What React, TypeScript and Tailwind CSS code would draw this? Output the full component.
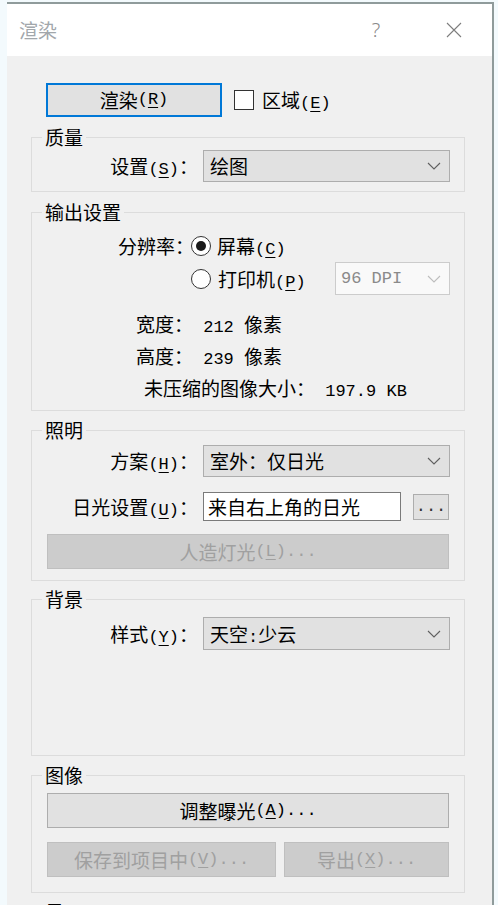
import React from 'react';

const mono = "font-['Liberation_Mono',monospace] text-[17px] leading-[10px]";

function Key({ k, dots }: { k: string; dots?: boolean }) {
  return (
    <span className={mono}>
      (<span className="underline decoration-1 underline-offset-[3px]">{k}</span>){dots ? '...' : ''}
    </span>
  );
}

function Chevron({ color = '#5f5f5f' }: { color?: string }) {
  return (
    <svg width="14" height="8" viewBox="0 0 14 8" fill="none">
      <path d="M1 1 L7 7 L13 1" stroke={color} strokeWidth="1.1" />
    </svg>
  );
}

function Combo({ children, className = '' }: { children: React.ReactNode; className?: string }) {
  return (
    <div className={`flex items-center justify-between border border-[#adadad] bg-[#e1e1e1] pl-[6px] pr-[8px] ${className}`}>
      <span>{children}</span>
      <Chevron />
    </div>
  );
}

function Btn({ children, className = '', disabled }: { children: React.ReactNode; className?: string; disabled?: boolean }) {
  return (
    <div
      className={`flex items-center justify-center border ${
        disabled ? 'border-[#bfbfbf] bg-[#cccccc] text-[#a0a0a0]' : 'border-[#adadad] bg-[#e1e1e1]'
      } ${className}`}
    >
      {children}
    </div>
  );
}

function Radio({ checked }: { checked?: boolean }) {
  return (
    <span className="flex h-[20px] w-[20px] shrink-0 items-center justify-center rounded-full border border-[#333333] bg-white">
      {checked && <span className="h-[10px] w-[10px] rounded-full bg-[#1a1a1a]" />}
    </span>
  );
}

function Group({ title, className = '', children }: { title: string; className?: string; children?: React.ReactNode }) {
  return (
    <fieldset className={`ml-[24px] w-[434px] border border-[#dcdcdc] ${className}`}>
      <legend className="ml-[10px] px-[3px] leading-[20px]">{title}</legend>
      {children}
    </fieldset>
  );
}

function Row({ label, children, className = '' }: { label: React.ReactNode; children: React.ReactNode; className?: string }) {
  return (
    <div className={`flex items-center ${className}`}>
      <div className="w-[166px] shrink-0 text-right whitespace-nowrap">{label}</div>
      <div className="ml-[5px]">{children}</div>
    </div>
  );
}

export default function App() {
  return (
    <div className="h-[905px] overflow-hidden bg-[#f3fafd] pt-[2px] pl-[7px] font-['Noto_Sans_CJK_SC',sans-serif] text-[19px] leading-[20px] text-black">
      <div className="flex h-full w-[487px] flex-col border-t-2 border-r-2 border-[#8f9b9b] bg-[#f0f0f0]">
        {/* title bar */}
        <div className="flex h-[52px] shrink-0 items-center bg-white">
          <span className="pl-[12px] text-[#a2a7ab]">渲染</span>
          <span className="ml-auto w-[20px] text-center font-['Noto_Sans',sans-serif] text-[20px] font-light text-[#8a8a8a]">?</span>
          <svg className="ml-[60px] mr-[30px]" width="16" height="16" viewBox="0 0 16 16">
            <path d="M1 1 L15 15 M15 1 L1 15" stroke="#7d7d7d" strokeWidth="1.1" />
          </svg>
        </div>

        <div className="flex-1 pt-[27px]">
          <div className="flex items-center">
            <Btn className="ml-[39px] h-[34px] w-[176px] border-2 !border-[#0078d7]">
              渲染<Key k="R" />
            </Btn>
            <span className="ml-[12px] h-[20px] w-[20px] border border-[#333333] bg-white" />
            <span className="ml-[8px]">
              区域<Key k="E" />
            </span>
          </div>

          <Group title="质量" className="mt-[10px] pb-[9px]">
            <Row className="mt-[3px]" label={<>设置<Key k="S" />：</>}>
              <Combo className="h-[32px] w-[247px]">绘图</Combo>
            </Row>
          </Group>

          <Group title="输出设置" className="mt-[10px] pb-[12px]">
            <div className="mt-[12px] flex h-[24px] items-center">
              <div className="w-[162px] shrink-0 text-right">分辨率：</div>
              <span className="-ml-[3px]">
                <Radio checked />
              </span>
              <span className="ml-[6px]">
                屏幕<Key k="C" />
              </span>
            </div>
            <div className="mt-[4px] flex h-[33px] items-center">
              <div className="w-[159px] shrink-0" />
              <Radio />
              <span className="ml-[7px] w-[117px] shrink-0">
                打印机<Key k="P" />
              </span>
              <div className="flex h-[33px] w-[115px] items-center justify-between border border-[#cccccc] bg-[#f9f9f9] pl-[5px] pr-[8px]">
                <span className={`${mono} text-[#8a8a8a]`}>96 DPI</span>
                <Chevron color="#bdbdbd" />
              </div>
            </div>
            <div className="mt-[19px] h-[20px] pl-[104px]">
              宽度：<span className={mono}> 212 </span>像素
            </div>
            <div className="mt-[12px] h-[20px] pl-[104px]">
              高度：<span className={mono}> 239 </span>像素
            </div>
            <div className="mt-[12px] h-[20px] pl-[112px]">
              未压缩的图像大小：<span className={mono}> 197.9 KB</span>
            </div>
          </Group>

          <Group title="照明" className="mt-[9px] pb-[11px]">
            <Row className="mt-[5px]" label={<>方案<Key k="H" />：</>}>
              <Combo className="h-[32px] w-[247px]">室外：仅日光</Combo>
            </Row>
            <Row className="mt-[15px]" label={<>日光设置<Key k="U" />：</>}>
              <div className="flex items-center">
                <div className="flex h-[29px] w-[198px] items-center border border-[#7a7a7a] bg-white pl-[4px]">
                  来自右上角的日光
                </div>
                <Btn className="ml-[12px] h-[26px] w-[36px]">
                  <span className={`${mono} text-[#333333]`}>...</span>
                </Btn>
              </div>
            </Row>
            <Btn disabled className="mt-[13px] ml-[15px] h-[35px] w-[402px]">
              人造灯光<Key k="L" dots />
            </Btn>
          </Group>

          <Group title="背景" className="mt-[8px] pb-[105px]">
            <Row className="mt-[8px]" label={<>样式<Key k="Y" />：</>}>
              <Combo className="h-[33px] w-[247px]">
                天空<span className={mono}>:</span>少云
              </Combo>
            </Row>
          </Group>

          <Group title="图像" className="mt-[9px] pb-[15px]">
            <Btn className="mt-[8px] ml-[15px] h-[35px] w-[402px]">
              调整曝光<Key k="A" dots />
            </Btn>
            <div className="mt-[14px] ml-[15px] flex gap-[8px]">
              <Btn disabled className="h-[35px] w-[229px]">
                保存到项目中<Key k="V" dots />
              </Btn>
              <Btn disabled className="h-[35px] w-[165px]">
                导出<Key k="X" dots />
              </Btn>
            </div>
          </Group>

          <Group title="显示" className="mt-[9px] pb-[15px]">
            <div className="h-[60px]" />
          </Group>
        </div>
      </div>
    </div>
  );
}
